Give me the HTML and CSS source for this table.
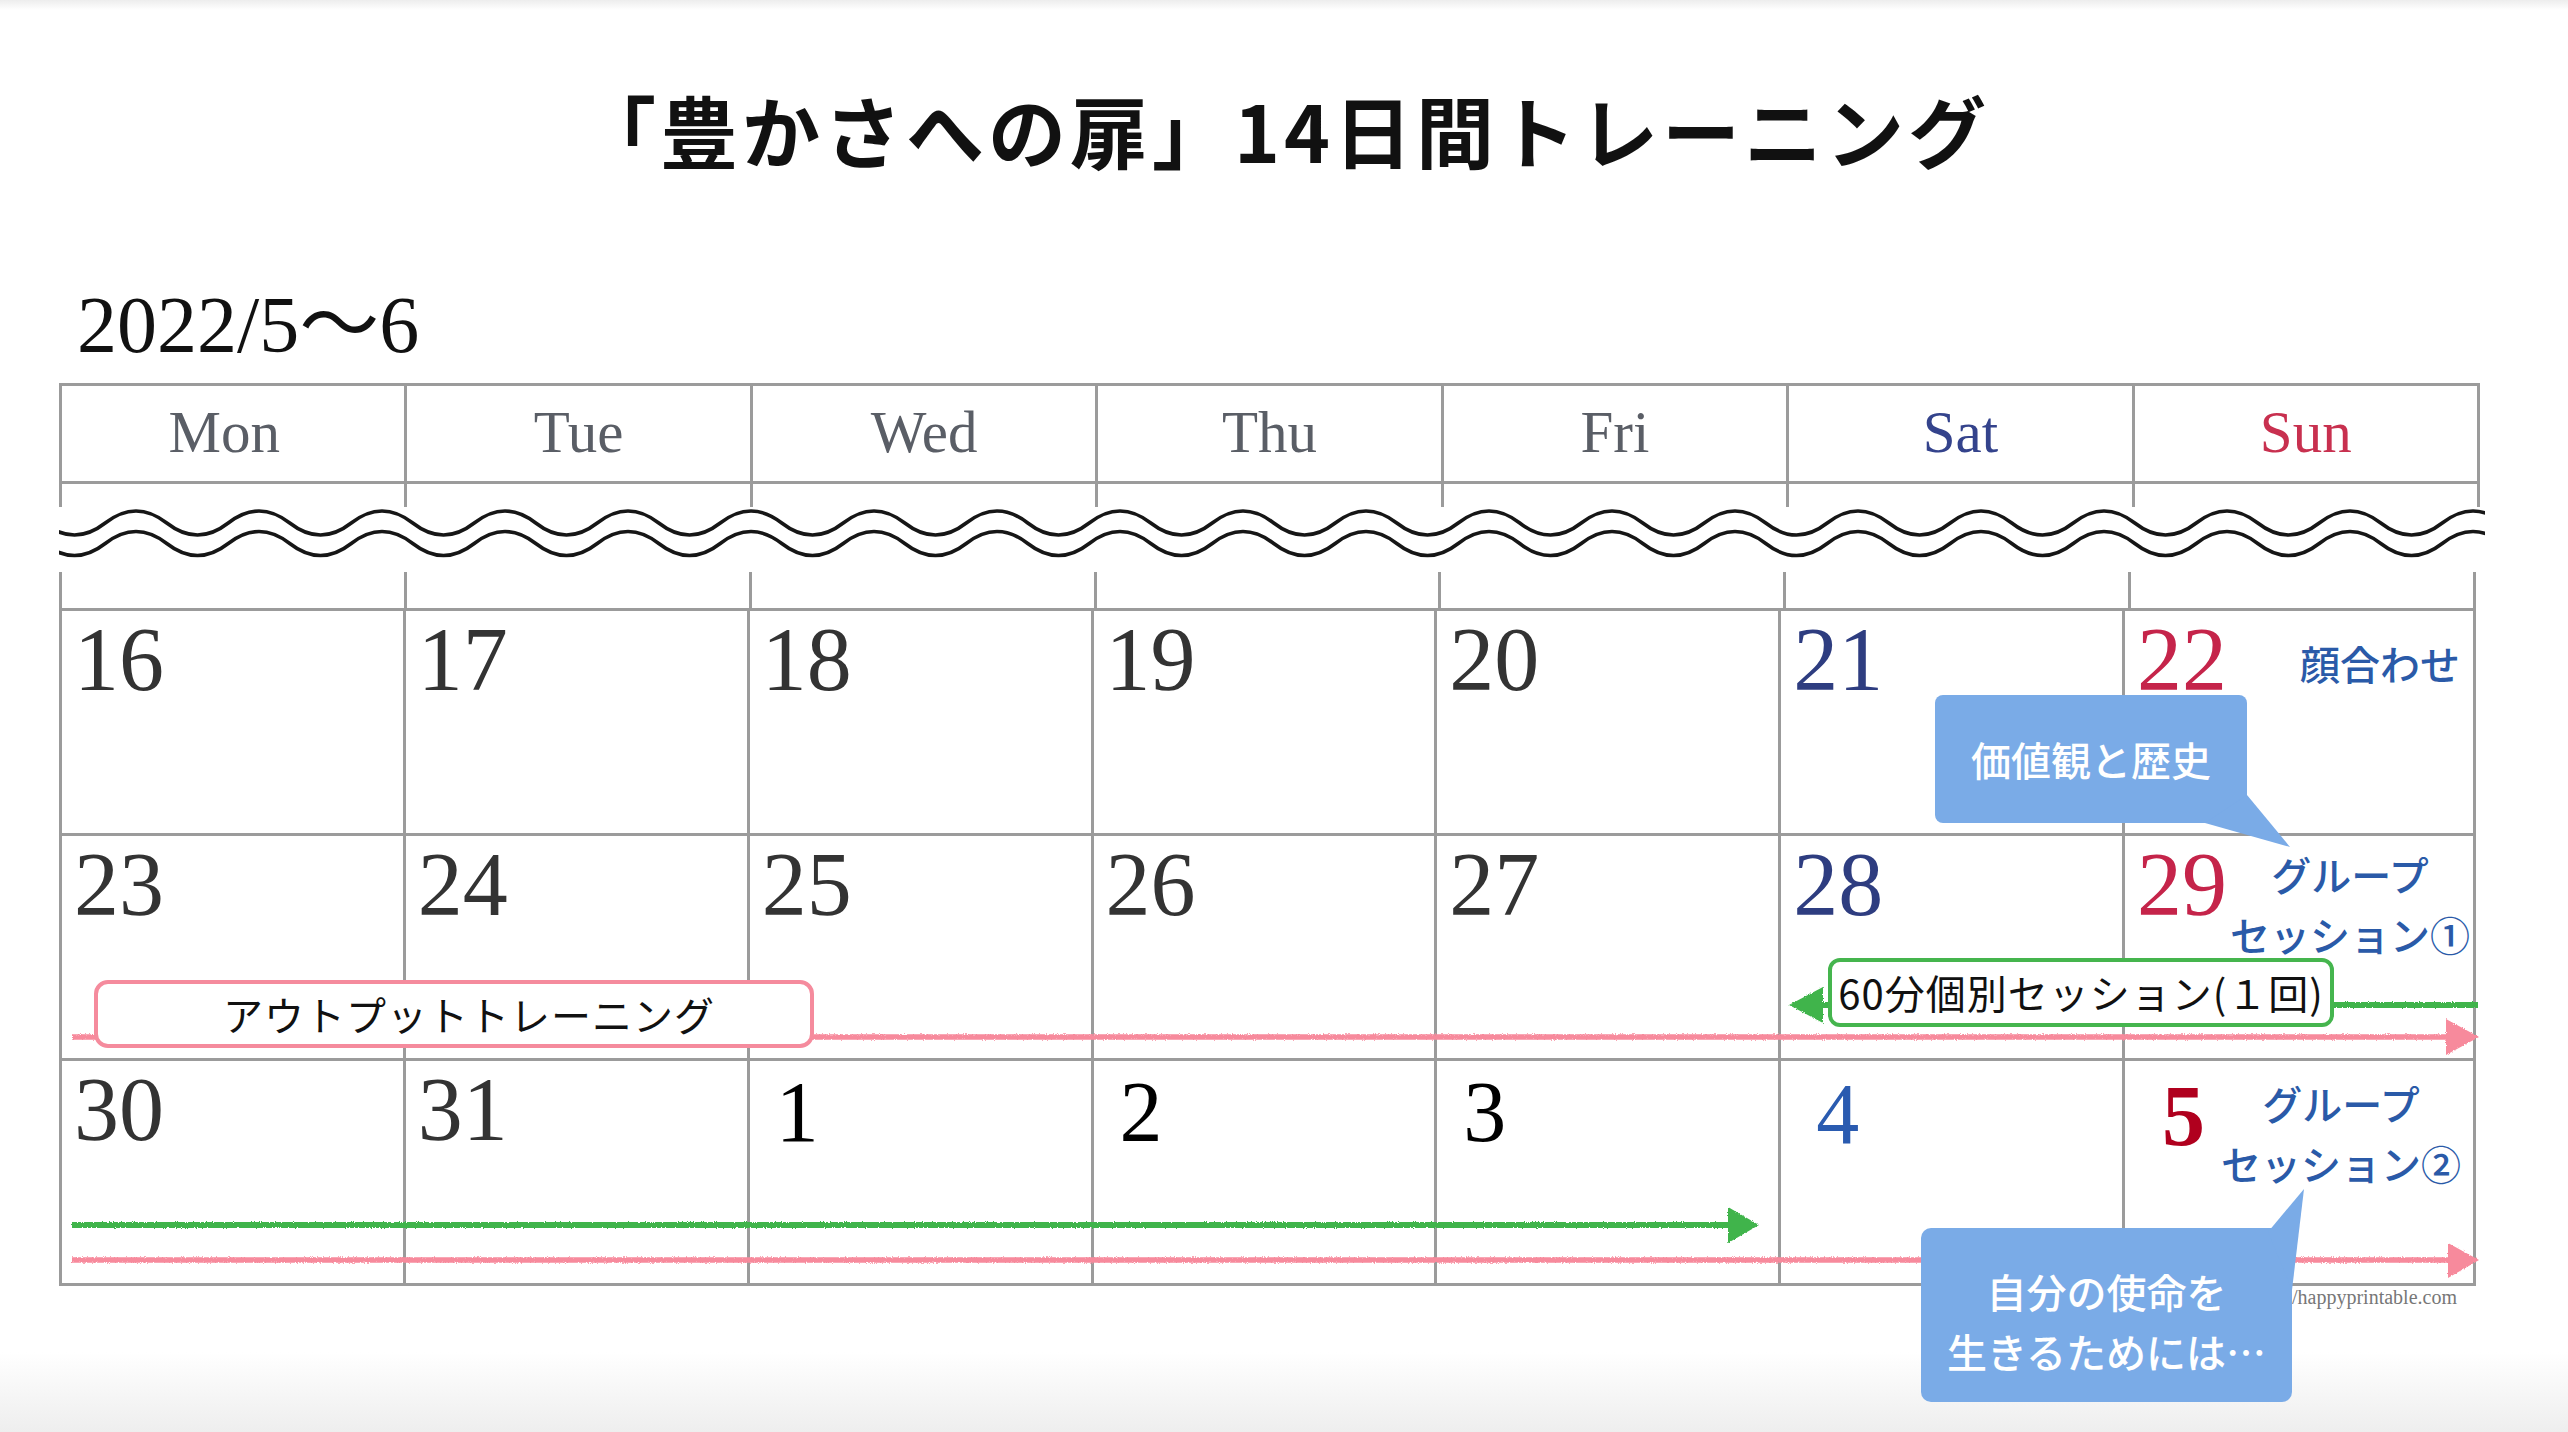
FILE: index.html
```html
<!DOCTYPE html>
<html lang="ja">
<head>
<meta charset="utf-8">
<title>「豊かさへの扉」14日間トレーニング</title>
<link rel="stylesheet" href="styles.css">
</head>
<body>
<div class="page">
  <h1 class="title">「豊かさへの扉」14日間トレーニング</h1>
  <div class="period">2022/5〜6</div>

  <div class="calendar">
    <div class="cal-head">
      <div class="dow dow-mon">Mon</div>
      <div class="dow">Tue</div>
      <div class="dow">Wed</div>
      <div class="dow">Thu</div>
      <div class="dow">Fri</div>
      <div class="dow dow-sat">Sat</div>
      <div class="dow dow-sun">Sun</div>
    </div>
    <div class="stub stub-top">
      <div></div><div></div><div></div><div></div><div></div><div></div><div></div>
    </div>
    <div class="wave">
      <svg width="2426" height="65" viewBox="0 0 2426 65">
        <path d="M-76.75,16 q30.75,-24 61.5,0 t61.5,0 t61.5,0 t61.5,0 t61.5,0 t61.5,0 t61.5,0 t61.5,0 t61.5,0 t61.5,0 t61.5,0 t61.5,0 t61.5,0 t61.5,0 t61.5,0 t61.5,0 t61.5,0 t61.5,0 t61.5,0 t61.5,0 t61.5,0 t61.5,0 t61.5,0 t61.5,0 t61.5,0 t61.5,0 t61.5,0 t61.5,0 t61.5,0 t61.5,0 t61.5,0 t61.5,0 t61.5,0 t61.5,0 t61.5,0 t61.5,0 t61.5,0 t61.5,0 t61.5,0 t61.5,0 t61.5,0 t61.5,0" />
        <path d="M-76.75,36.5 q30.75,-24 61.5,0 t61.5,0 t61.5,0 t61.5,0 t61.5,0 t61.5,0 t61.5,0 t61.5,0 t61.5,0 t61.5,0 t61.5,0 t61.5,0 t61.5,0 t61.5,0 t61.5,0 t61.5,0 t61.5,0 t61.5,0 t61.5,0 t61.5,0 t61.5,0 t61.5,0 t61.5,0 t61.5,0 t61.5,0 t61.5,0 t61.5,0 t61.5,0 t61.5,0 t61.5,0 t61.5,0 t61.5,0 t61.5,0 t61.5,0 t61.5,0 t61.5,0 t61.5,0 t61.5,0 t61.5,0 t61.5,0 t61.5,0 t61.5,0" />
      </svg>
    </div>
    <div class="stub stub-bottom">
      <div></div><div></div><div></div><div></div><div></div><div></div><div></div>
    </div>
    <div class="cal-body">
      <div class="day"><span class="num">16</span></div>
      <div class="day"><span class="num">17</span></div>
      <div class="day"><span class="num">18</span></div>
      <div class="day"><span class="num">19</span></div>
      <div class="day"><span class="num">20</span></div>
      <div class="day"><span class="num num-sat">21</span></div>
      <div class="day"><span class="num num-sun">22</span><span class="note note-meet">顔合わせ</span></div>

      <div class="day"><span class="num">23</span></div>
      <div class="day"><span class="num">24</span></div>
      <div class="day"><span class="num">25</span></div>
      <div class="day"><span class="num">26</span></div>
      <div class="day"><span class="num">27</span></div>
      <div class="day"><span class="num num-sat">28</span></div>
      <div class="day"><span class="num num-sun">29</span><span class="note note-group1">グループ<br>セッション①</span></div>

      <div class="day"><span class="num">30</span></div>
      <div class="day"><span class="num">31</span></div>
      <div class="day"><span class="num num-next">1</span></div>
      <div class="day"><span class="num num-next">2</span></div>
      <div class="day"><span class="num num-next">3</span></div>
      <div class="day"><span class="num num-next num-4">4</span></div>
      <div class="day"><span class="num num-next num-5">5</span><span class="note note-group2">グループ<br>セッション②</span></div>
    </div>
  </div>

  <svg class="tracks" width="2568" height="1432" viewBox="0 0 2568 1432">
    <defs>
      <filter id="crayon" filterUnits="userSpaceOnUse" x="0" y="0" width="2568" height="1432">
        <feTurbulence type="fractalNoise" baseFrequency="0.9" numOctaves="2" result="noise"/>
        <feDisplacementMap in="SourceGraphic" in2="noise" scale="3" xChannelSelector="R" yChannelSelector="G"/>
      </filter>
    </defs>
    <g filter="url(#crayon)">
      <line class="trk-green" x1="1815" y1="1005" x2="2478" y2="1005"/>
      <polygon class="head-green" points="1789,1005 1823,987 1823,1023"/>
      <line class="trk-pink" x1="72" y1="1037" x2="2450" y2="1037"/>
      <polygon class="head-pink" points="2479,1037 2446,1019 2446,1055"/>
      <line class="trk-green" x1="72" y1="1225" x2="1734" y2="1225"/>
      <polygon class="head-green" points="1759,1225 1728,1207 1728,1243"/>
      <line class="trk-pink" x1="72" y1="1260" x2="2452" y2="1260"/>
      <polygon class="head-pink" points="2479,1260 2448,1243 2448,1278"/>
    </g>
  </svg>

  <div class="tag tag-output">アウトプットトレーニング</div>
  <div class="tag tag-session">60分個別セッション(１回)</div>
  <div class="credit">/happyprintable.com</div>
  <div class="bubble bubble-values">価値観と歴史</div>
  <div class="bubble bubble-mission">自分の使命を<br>生きるためには…</div>
</div>
</body>
</html>
```

FILE: styles.css
```css
* { box-sizing: border-box; }

html, body {
  margin: 0;
  padding: 0;
  background: #ffffff;
}

.page {
  position: relative;
  width: 2568px;
  height: 1432px;
  overflow: hidden;
  padding-top: 90px;
  background: linear-gradient(to bottom, #ededed 0px, #ffffff 10px, #ffffff 1352px, #eeeeee 1432px);
  font-family: "Noto Sans CJK JP", "Noto Sans", sans-serif;
}

.title {
  margin: 0;
  text-align: center;
  font-family: "Noto Sans CJK JP", sans-serif;
  font-weight: 700;
  font-size: 78px;
  line-height: 78px;
  letter-spacing: 4px;
  color: #111111;
}

.period {
  margin: 117px 0 0 77px;
  font-family: "Liberation Serif", "Noto Sans CJK JP", serif;
  font-size: 80px;
  line-height: 80px;
  color: #111111;
}

.calendar {
  margin: 18px 0 0 59px;
  width: 2426px;
}

.cal-head {
  width: 2421px;
  display: grid;
  grid-template-columns: repeat(7, 1fr);
  gap: 3px;
  padding: 3px;
  background: #9b9b9b;
}

.dow {
  height: 95px;
  background: #ffffff;
  text-align: center;
  font-family: "Liberation Serif", serif;
  font-size: 59px;
  line-height: 92px;
  color: #5a5e66;
}

.dow-mon { padding-right: 18px; }
.dow-sat { color: #34438c; }
.dow-sun { color: #c8304f; }

.stub {
  display: grid;
  grid-template-columns: repeat(7, 1fr);
  gap: 3px;
  padding: 0 3px;
  background: #9b9b9b;
}

.stub > div { background: #ffffff; }

.stub-top { width: 2421px; height: 23px; }
.stub-bottom { width: 2417px; height: 36px; }

.wave {
  height: 65px;
  background: #ffffff;
}

.wave svg {
  display: block;
}

.wave path {
  fill: none;
  stroke: #161616;
  stroke-width: 3.6;
}

.cal-body {
  width: 2417px;
  display: grid;
  grid-template-columns: repeat(7, 1fr);
  grid-template-rows: repeat(3, 222px);
  gap: 3px;
  padding: 3px;
  background: #9b9b9b;
}

.day {
  background: #ffffff;
  display: flex;
  align-items: flex-start;
}

.num {
  font-family: "Liberation Serif", serif;
  font-size: 90px;
  line-height: 1;
  padding: 4px 0 0 12px;
  color: #333333;
}

.num-sat { color: #2e3d80; }
.num-sun { color: #c5244a; }

.num-next {
  font-size: 86px;
  padding: 8px 0 0 26px;
  color: #000000;
}

.num-4 {
  color: #2a5bb0;
  padding: 10px 0 0 35px;
}

.num-5 {
  color: #b0001e;
  font-weight: 700;
  padding: 12px 0 0 37px;
}

.note {
  margin-left: auto;
  font-family: "Noto Sans CJK JP", sans-serif;
  font-weight: 500;
  font-size: 40px;
  color: #2a5aa8;
  white-space: nowrap;
}

.note-meet {
  margin-top: 28px;
  padding-right: 13px;
  line-height: 48px;
}

.note-group1 {
  width: 246px;
  margin-top: 8px;
  line-height: 60px;
  text-align: center;
}

.note-group2 {
  width: 246px;
  margin-top: 12px;
  margin-right: 9px;
  line-height: 60px;
  text-align: center;
}

.tracks {
  position: absolute;
  left: 0;
  top: 0;
  pointer-events: none;
}

.trk-green {
  stroke: #3fb44b;
  stroke-width: 6;
}

.trk-pink {
  stroke: #f78a9c;
  stroke-width: 5.5;
}

.head-green { fill: #3fb44b; }
.head-pink { fill: #f78a9c; }

.tag {
  position: absolute;
  background: #ffffff;
  text-align: center;
  white-space: nowrap;
  font-family: "Noto Sans CJK JP", sans-serif;
  font-weight: 400;
  color: #111111;
}

.tag-output {
  left: 94px;
  top: 980px;
  width: 720px;
  height: 68px;
  border: 4px solid #f58b9d;
  border-radius: 14px;
  padding-left: 30px;
  font-size: 40px;
  line-height: 60px;
  letter-spacing: 1px;
}

.tag-session {
  left: 1828px;
  top: 958px;
  width: 506px;
  height: 69px;
  border: 4px solid #45b54e;
  border-radius: 12px;
  font-size: 40px;
  line-height: 60px;
  letter-spacing: 1px;
  display: flex;
  justify-content: center;
}

.credit {
  position: absolute;
  left: 2292px;
  top: 1287px;
  font-family: "Liberation Serif", serif;
  font-size: 20px;
  line-height: 1;
  color: #777777;
}

.bubble {
  position: absolute;
  background: #7aabe7;
  color: #ffffff;
  text-align: center;
  font-family: "Noto Sans CJK JP", sans-serif;
  font-weight: 500;
  font-size: 40px;
  white-space: nowrap;
}

.bubble::after {
  content: "";
  position: absolute;
  background: #7aabe7;
}

.bubble-values {
  left: 1935px;
  top: 695px;
  width: 312px;
  height: 128px;
  border-radius: 8px;
  line-height: 128px;
}

.bubble-values::after {
  left: 265px;
  top: 95px;
  width: 90px;
  height: 57px;
  clip-path: polygon(5px 33px, 47px 5px, 90px 57px);
}

.bubble-mission {
  left: 1921px;
  top: 1228px;
  width: 371px;
  height: 174px;
  border-radius: 10px;
  padding-top: 33px;
  line-height: 60px;
}

.bubble-mission::after {
  left: 339px;
  top: -43px;
  width: 50px;
  height: 110px;
  clip-path: polygon(8px 47px, 44px 4px, 32px 105px);
}
```
